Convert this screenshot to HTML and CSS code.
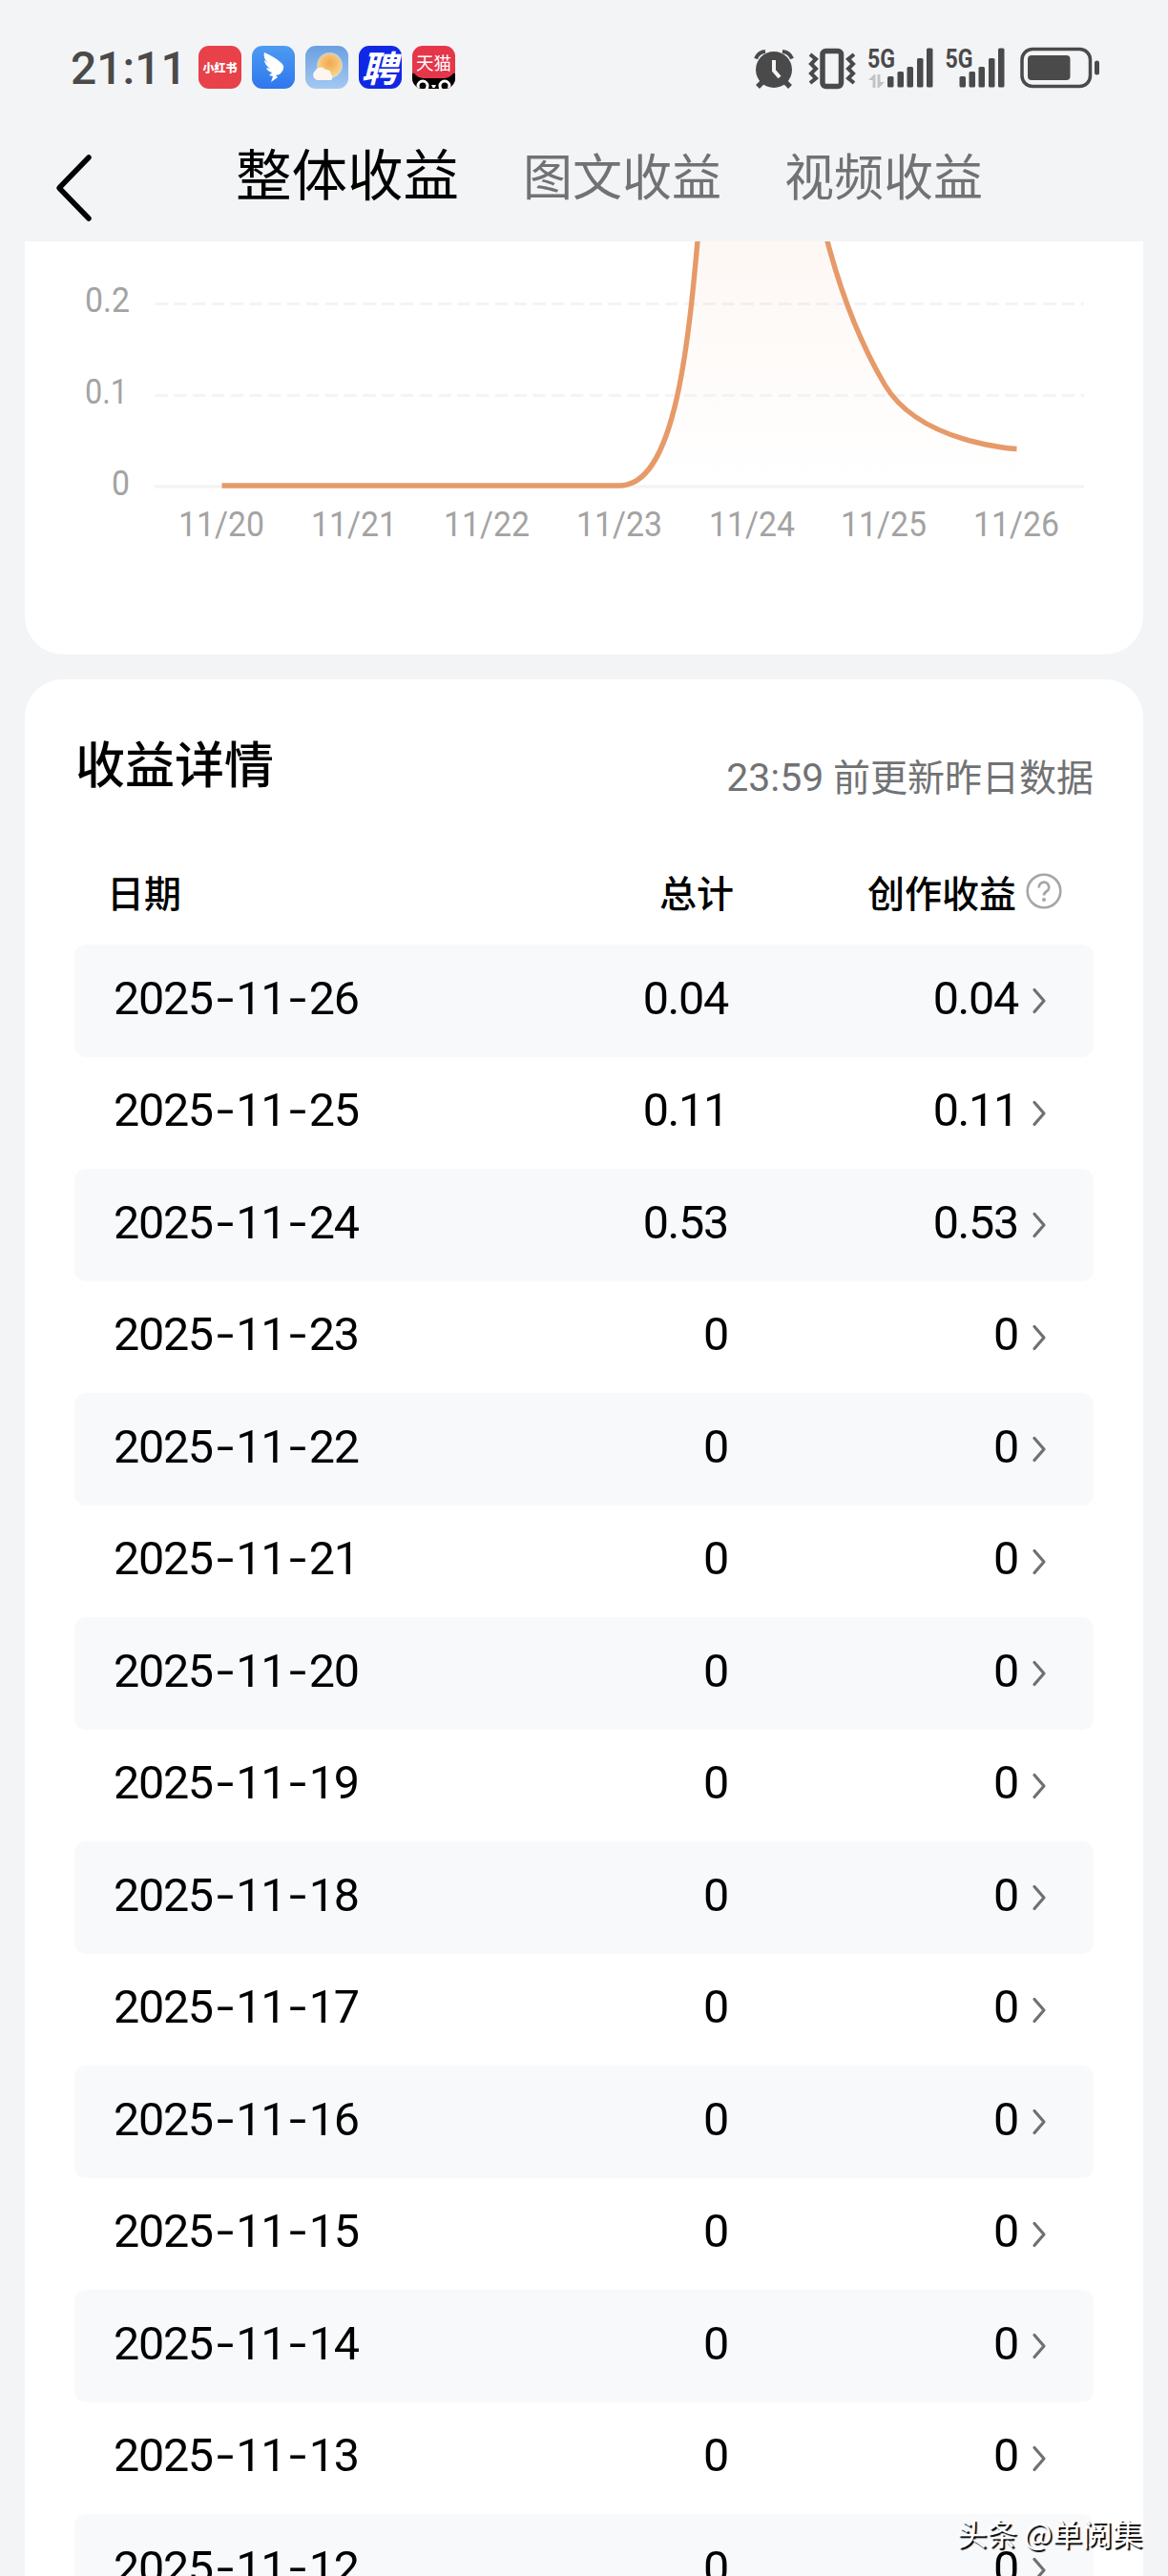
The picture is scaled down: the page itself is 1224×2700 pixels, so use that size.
FILE: index.html
```html
<!DOCTYPE html>
<html lang="zh-CN">
<head>
    <meta charset="utf-8">
    <title>整体收益</title>
    <link rel="stylesheet" href="styles.css">
</head>
<body>
<div class="status-bar">
    <span class="clock">21:11</span>
    <div class="app-icons">
        <span class="app red">小红书</span>
        <span class="app wing">
            <svg width="45" height="45" viewBox="0 0 45 45">
                <path d="M13 7C20 10 31 16 33 21C34 24 32 27 29 30L25 31L27 33L20 38L22 32L18 31L21 28C18 27 16 26 15 23L19 24C15 21 13 18 13 15L17 18C13 14 12 11 13 7Z" fill="#fff"/>
            </svg>
        </span>
        <span class="app weather">
            <svg width="45" height="45" viewBox="0 0 45 45">
                <defs>
                    <radialGradient id="sun" cx="0.5" cy="0.4" r="0.6">
                        <stop offset="0" stop-color="#f0a850"/>
                        <stop offset="1" stop-color="#fbd48a"/>
                    </radialGradient>
                </defs>
                <circle cx="25.500" cy="20.500" r="13.500" fill="#ffe9c0" opacity="0.6"/>
                <circle cx="25.500" cy="20.500" r="12" fill="url(#sun)"/>
                <path d="M13 36A5.500 5.500 0 0 1 10 26.500A6.500 6.500 0 0 1 21 25A5 5 0 0 1 27 30A4 4 0 0 1 27 36Z" fill="#fdf6ee"/>
            </svg>
        </span>
        <span class="app hire">聘</span>
        <span class="app tmall">天猫
            <svg class="cat" width="45" height="17" viewBox="0 0 45 17">
                <path d="M0 1Q2 0 4 3Q7 6 11 6H34Q38 6 41 3Q43 0 45 1V17H0Z" fill="#000"/>
                <circle cx="11" cy="14" r="5" fill="#000" stroke="#fff" stroke-width="3"/>
                <circle cx="34" cy="14" r="5" fill="#000" stroke="#fff" stroke-width="3"/>
                <path d="M20 13h5l-1.500 3h-2z" fill="#fff"/>
            </svg>
        </span>
    </div>
    <svg class="sys-icons" width="370" height="50" viewBox="785 45 370 50" fill="#4a4a4a">
        <!-- alarm -->
        <circle cx="811" cy="73" r="19"/>
        <path d="M792 61.500A12 12 0 0 1 802 54M830 61.500A12 12 0 0 0 820 54" fill="none" stroke="#4a4a4a" stroke-width="4"/>
        <path d="M799 86l-5 5M823 86l5 5" stroke="#4a4a4a" stroke-width="5.500"/>
        <path d="M811 63v11l6 7" fill="none" stroke="#f3f4f6" stroke-width="4"/>
        <!-- vibrate -->
        <rect x="862" y="53.500" width="19.500" height="37" rx="3.500" fill="none" stroke="#4a4a4a" stroke-width="5.500"/>
        <path d="M849 57l6 5-5 5 5 5-5 5 5 5-6 5M895 57l-6 5 5 5-5 5 5 5-5 5 6 5" fill="none" stroke="#4a4a4a" stroke-width="4"/>
        <!-- signal 1 -->
        <text x="909" y="71" class="net" textLength="29" lengthAdjust="spacingAndGlyphs">5G</text>
        <path d="M910 84l6-6h1.500v14h-3v-8zM927 86l-6 6h-1.500v-14h3v8z" fill="#c2c3c5"/>
        <rect x="930" y="80" width="6.500" height="11.500" rx="1.500"/>
        <rect x="940.500" y="75" width="6.500" height="16.500" rx="1.500"/>
        <rect x="950.500" y="70" width="6.500" height="21.500" rx="1.500"/>
        <rect x="961" y="61" width="6.500" height="30.500" rx="1.500"/>
        <rect x="971" y="50.500" width="6.500" height="41" rx="1.500"/>
        <!-- signal 2 -->
        <text x="990.500" y="71" class="net" textLength="29" lengthAdjust="spacingAndGlyphs">5G</text>
        <rect x="1005.500" y="80" width="6.500" height="11.500" rx="1.500"/>
        <rect x="1015.500" y="75" width="6.500" height="16.500" rx="1.500"/>
        <rect x="1025.500" y="70" width="6.500" height="21.500" rx="1.500"/>
        <rect x="1036" y="61" width="6.500" height="30.500" rx="1.500"/>
        <rect x="1046" y="50.500" width="6.500" height="41" rx="1.500"/>
        <!-- battery -->
        <rect x="1071" y="51.500" width="71.500" height="39" rx="11" fill="none" stroke="#4a4a4a" stroke-width="3.500"/>
        <rect x="1077" y="58" width="44.500" height="26" rx="4"/>
        <rect x="1147" y="63.500" width="5" height="15" rx="2.500"/>
    </svg>
</div>

<div class="nav">
    <svg class="back" width="40" height="76" viewBox="0 0 40 76">
        <path d="M35 6L4 38L35 70" fill="none" stroke="#000" stroke-width="5.500" stroke-linecap="round" stroke-linejoin="round"/>
    </svg>
    <div class="tabs">
        <span class="tab active">整体收益</span>
        <span class="tab">图文收益</span>
        <span class="tab">视频收益</span>
    </div>
</div>

<div class="card chart-card">
    <svg class="chart" width="1172" height="433" viewBox="26 253 1172 433">
        <defs>
            <linearGradient id="area" gradientUnits="userSpaceOnUse" x1="0" y1="0" x2="0" y2="509">
                <stop offset="0" stop-color="#e99a67" stop-opacity="0.15"/>
                <stop offset="1" stop-color="#e99a67" stop-opacity="0"/>
            </linearGradient>
        </defs>
        <path d="M162.500 318.500H1136M162.500 414.500H1136" stroke="#f4f4f7" stroke-width="3" stroke-dasharray="13.200 6.600"/>
        <path d="M161.500 510H1136" stroke="#f2f3f5" stroke-width="3"/>
        <path d="M232.500 509H649C759 509 711 0 788 0C850 0 825 230.500 927 403C964 465.500 1065.500 470.500 1065.500 470.500V509Z" fill="url(#area)"/>
        <path d="M232.500 509H649C759 509 711 0 788 0C850 0 825 230.500 927 403C964 465.500 1065.500 470.500 1065.500 470.500" fill="none" stroke="#e69a69" stroke-width="5.400"/>
        <g class="axis">
            <text x="89" y="327" textLength="47" lengthAdjust="spacingAndGlyphs">0.2</text>
            <text x="89" y="423" textLength="45" lengthAdjust="spacingAndGlyphs">0.1</text>
            <text x="117" y="519" textLength="19" lengthAdjust="spacingAndGlyphs">0</text>
            <text x="187" y="562" textLength="90" lengthAdjust="spacingAndGlyphs">11/20</text>
            <text x="326" y="562" textLength="90" lengthAdjust="spacingAndGlyphs">11/21</text>
            <text x="465" y="562" textLength="90" lengthAdjust="spacingAndGlyphs">11/22</text>
            <text x="604" y="562" textLength="90" lengthAdjust="spacingAndGlyphs">11/23</text>
            <text x="743" y="562" textLength="90" lengthAdjust="spacingAndGlyphs">11/24</text>
            <text x="881" y="562" textLength="90" lengthAdjust="spacingAndGlyphs">11/25</text>
            <text x="1020" y="562" textLength="90" lengthAdjust="spacingAndGlyphs">11/26</text>
        </g>
    </svg>
</div>

<div class="card detail-card">
    <div class="detail-head">
        <h2>收益详情</h2>
        <span class="update"><span class="hour">23:59</span> 前更新昨日数据</span>
    </div>
    <div class="row row-head">
        <span class="date">日期</span>
        <span class="total">总计</span>
        <span class="income">创作收益</span>
        <svg class="help" width="38" height="38" viewBox="0 0 38 38">
            <circle cx="19" cy="19" r="17.300" fill="none" stroke="#a6a6a6" stroke-width="2.600"/>
            <path d="M13.800 15.500A5.200 5.200 0 1 1 21.500 19.500C19.500 20.700 19 21.500 19 23.500" fill="none" stroke="#a6a6a6" stroke-width="2.800"/>
            <circle cx="19" cy="28" r="2" fill="#a6a6a6"/>
        </svg>
    </div>
    <div id="rows"></div>
</div>

<div class="watermark">头条 @单阅集</div>

<script>
    var data = [
        ['2025-11-26', '0.04'],
        ['2025-11-25', '0.11'],
        ['2025-11-24', '0.53'],
        ['2025-11-23', '0'],
        ['2025-11-22', '0'],
        ['2025-11-21', '0'],
        ['2025-11-20', '0'],
        ['2025-11-19', '0'],
        ['2025-11-18', '0'],
        ['2025-11-17', '0'],
        ['2025-11-16', '0'],
        ['2025-11-15', '0'],
        ['2025-11-14', '0'],
        ['2025-11-13', '0'],
        ['2025-11-12', '0']
    ];
    var arrow = '<svg class="arrow" width="18" height="32" viewBox="0 0 18 32">' +
        '<path d="M3 4.500L13 16L3 27.500" fill="none" stroke="#707070" stroke-width="3.200" stroke-linecap="round" stroke-linejoin="round"/></svg>';
    var html = '';

    for (var i = 0; i < data.length; i++) {
        html += '<div class="row">' +
            '<span class="date">' + data[i][0].replace(/-/g, '<i>-</i>') + '</span>' +
            '<span class="total">' + data[i][1] + '</span>' +
            '<span class="income">' + data[i][1] + '</span>' + arrow + '</div>';
    }
    document.querySelector('#rows').innerHTML = html;
</script>
</body>
</html>
```
FILE: styles.css
```css
body {
    margin: 0;
    width: 1224px;
    height: 2700px;
    overflow: hidden;
    position: relative;
    background: #f3f4f6;
    color: #000;
    font-family: Roboto, "Noto Sans CJK SC", sans-serif;
}

svg {
    display: block;
    flex: none;
}

/* status bar */
.status-bar {
    display: flex;
    align-items: flex-start;
    box-sizing: border-box;
    height: 115px;
    padding: 26px 0 0 74px;
}

.clock {
    width: 134px;
    margin-top: 23px;
    font-size: 48px;
    font-weight: 500;
    line-height: 45px;
    color: #4a4a4a;
}

.app-icons {
    display: flex;
    gap: 11px;
    margin-top: 22px;
}

.app {
    position: relative;
    width: 45px;
    height: 45px;
    border-radius: 11px;
    overflow: hidden;
    color: #fff;
    text-align: center;
    white-space: nowrap;
    font-family: "Noto Sans CJK SC", sans-serif;
}

.red {
    background: #e8414a;
    font-size: 12px;
    font-weight: 900;
    line-height: 46px;
}

.wing {
    background: linear-gradient(#4d9cf0, #2f76ee);
}

.weather {
    background: linear-gradient(#6a9fe0, #a3c9f2);
}

.hire {
    background: #1127e6;
    font-size: 38px;
    font-weight: 700;
    font-style: italic;
    line-height: 43px;
    text-indent: -2px;
}

.tmall {
    background: #e5364a;
    font-size: 18.500px;
    line-height: 35px;
}

.cat {
    position: absolute;
    left: 0;
    bottom: 0;
}

.sys-icons {
    margin: 19px 0 0 308px;
}

.net {
    font: bold 28px Roboto, sans-serif;
}

/* top nav */
.nav {
    display: flex;
    height: 138px;
}

.back {
    margin: 44px 0 0 58px;
}

.tabs {
    display: flex;
    align-items: baseline;
    height: 86px;
    line-height: 86px;
    margin: 27px 0 0 149px;
}

.tab {
    width: 274px;
    font-size: 52px;
    color: #717274;
    white-space: nowrap;
}

.tab.active {
    width: 301px;
    font-size: 58.500px;
    color: #000;
}

/* cards */
.card {
    margin: 0 26px;
    background: #fff;
}

.chart-card {
    height: 433px;
    border-radius: 0 0 40px 40px;
    overflow: hidden;
}

.axis {
    font-size: 36px;
    font-weight: 400;
    fill: #a3a3a3;
}

.detail-card {
    box-sizing: border-box;
    height: 2100px;
    margin-top: 26px;
    padding: 46px 52px 0;
    border-radius: 40px 40px 0 0;
}

.detail-head {
    display: flex;
    justify-content: space-between;
    height: 138px;
}

.detail-head h2 {
    margin: 0;
    padding: 3px 0 0 1px;
    font-size: 52px;
    line-height: 86px;
    font-weight: 500;
}

.update {
    padding: 27px 0 0;
    font-size: 39px;
    line-height: 60px;
    color: #717274;
}

.hour {
    font-size: 41px;
}

.row {
    display: flex;
    align-items: center;
    box-sizing: border-box;
    height: 117.500px;
    padding: 0 0 5px 41px;
    border-radius: 12px;
    font-size: 48.500px;
    letter-spacing: -1.300px;
}

#rows .row:nth-child(odd) {
    background: #f8f9fb;
}

.date {
    width: 300px;
}

.date i {
    display: inline-block;
    width: 24.500px;
    font-style: normal;
    text-align: center;
    transform: scaleX(1.350);
}

.total {
    width: 344px;
    text-align: right;
}

.income {
    width: 304px;
    text-align: right;
}

.arrow {
    margin: 6px 0 0 14px;
}

.row-head {
    height: 94px;
    padding: 0 0 18px 34px;
    font-size: 39px;
    font-weight: 500;
    letter-spacing: 0;
}

.row-head .total {
    width: 357px;
}

.row-head .income {
    width: 296px;
}

.help {
    margin-left: 10px;
}

/* 右下角水印 */
.watermark {
    position: absolute;
    right: 27px;
    bottom: 24px;
    font: 31.500px/44px "Noto Sans CJK SC", sans-serif;
    color: #fff;
    text-shadow: 2px 2px 1px #000;
    white-space: nowrap;
}
```
